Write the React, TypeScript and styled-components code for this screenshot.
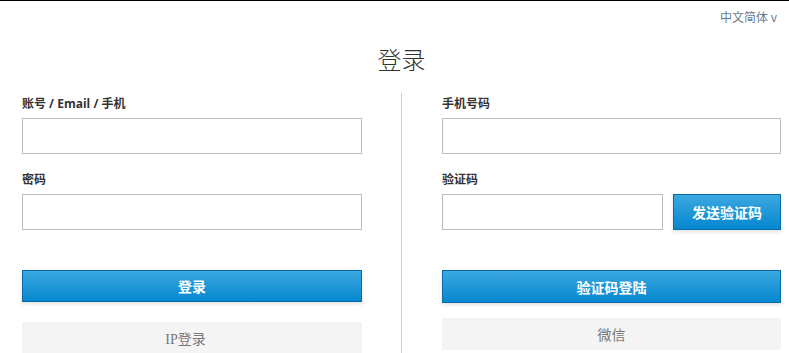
import React from "react";
import styled, { createGlobalStyle } from "styled-components";

const Global = createGlobalStyle`
  html, body { margin: 0; padding: 0; background: #fff; }
  body {
    border-top: 1px solid #000;
    font-family: "Open Sans", "Noto Sans CJK SC", sans-serif;
    color: #333;
    overflow: hidden;
  }
  * { box-sizing: border-box; }
`;

const Page = styled.div`
  width: 789px;
  height: 352px;
  overflow: hidden;
`;

const TopBar = styled.div`
  display: flex;
  justify-content: flex-end;
  padding: 7px 12px 0 0;
  height: 30px;
`;

const LangSwitch = styled.span`
  font-family: "Noto Sans CJK SC", sans-serif;
  font-size: 12px;
  line-height: 18px;
  color: #667a8e;
  cursor: pointer;
`;

const Title = styled.h1`
  margin: 0;
  text-align: center;
  font-family: "Noto Sans CJK SC", sans-serif;
  font-weight: 300;
  font-size: 24px;
  line-height: 30px;
  color: #333;
  padding: 13px 0 0 14px;
  height: 62px;
`;

const Main = styled.div`
  display: flex;
  padding-left: 22px;
  height: 260px;
`;

const Column = styled.div<{ $w: number }>`
  width: ${(p) => p.$w}px;
  display: flex;
  flex-direction: column;
  padding-top: 1px;
`;

const Divider = styled.div`
  width: 1px;
  background: #cfcfcf;
  margin: 0 40px 0 39px;
  align-self: stretch;
`;

const Field = styled.div`
  display: flex;
  flex-direction: column;
  margin-bottom: 16px;
`;

const Label = styled.label`
  font-family: "Open Sans", "Noto Sans CJK SC", sans-serif;
  font-size: 12px;
  font-weight: 700;
  line-height: 20px;
  color: #333;
  margin-bottom: 4px;
`;

const Input = styled.input`
  height: 36px;
  width: 100%;
  border: 1px solid #bdbdbd;
  background: #fff;
  padding: 0 8px;
  font-size: 14px;
  outline: none;
`;

const Row = styled.div`
  display: flex;
  gap: 10px;
`;

const SendButton = styled.button`
  flex: 0 0 108px;
  height: 36px;
  border: 1px solid #0a69a6;
  background: linear-gradient(#3ba8df, #0587cf);
  color: #fff;
  font-family: "Noto Sans CJK SC", sans-serif;
  font-weight: 700;
  font-size: 14px;
  box-shadow: 0 2px 4px rgba(0, 0, 0, 0.12);
  cursor: pointer;
  padding: 0;
`;

const PrimaryButton = styled.button<{ $mt: number }>`
  margin-top: ${(p) => p.$mt}px;
  height: 33px;
  width: 100%;
  border: 1px solid #0a69a6;
  background: linear-gradient(#3ba8df, #0587cf);
  color: #fff;
  font-family: "Noto Sans CJK SC", sans-serif;
  font-weight: 700;
  font-size: 14px;
  box-shadow: 0 2px 4px rgba(0, 0, 0, 0.12);
  cursor: pointer;
  padding: 0;
`;

const SecondaryButton = styled.button<{ $mt: number; $pr?: number }>`
  margin-top: ${(p) => p.$mt}px;
  height: 32px;
  width: 100%;
  border: none;
  background: #f4f4f4;
  color: #777;
  font-family: "Liberation Serif", "Noto Sans CJK SC", serif;
  font-size: 14px;
  cursor: pointer;
  padding: 0 ${(p) => p.$pr ?? 0}px 0 0;
`;

export default function App() {
  return (
    <Page>
      <Global />
      <TopBar>
        <LangSwitch>中文简体 v</LangSwitch>
      </TopBar>
      <Title>登录</Title>
      <Main>
        <Column $w={340}>
          <Field>
            <Label>账号 / Email / 手机</Label>
            <Input />
          </Field>
          <Field>
            <Label>密码</Label>
            <Input type="password" />
          </Field>
          <PrimaryButton $mt={24}>登录</PrimaryButton>
          <SecondaryButton $mt={20} $pr={13}>IP登录</SecondaryButton>
        </Column>
        <Divider />
        <Column $w={339}>
          <Field>
            <Label>手机号码</Label>
            <Input />
          </Field>
          <Field>
            <Label>验证码</Label>
            <Row>
              <Input />
              <SendButton>发送验证码</SendButton>
            </Row>
          </Field>
          <PrimaryButton $mt={24}>验证码登陆</PrimaryButton>
          <SecondaryButton $mt={15}>微信</SecondaryButton>
        </Column>
      </Main>
    </Page>
  );
}
